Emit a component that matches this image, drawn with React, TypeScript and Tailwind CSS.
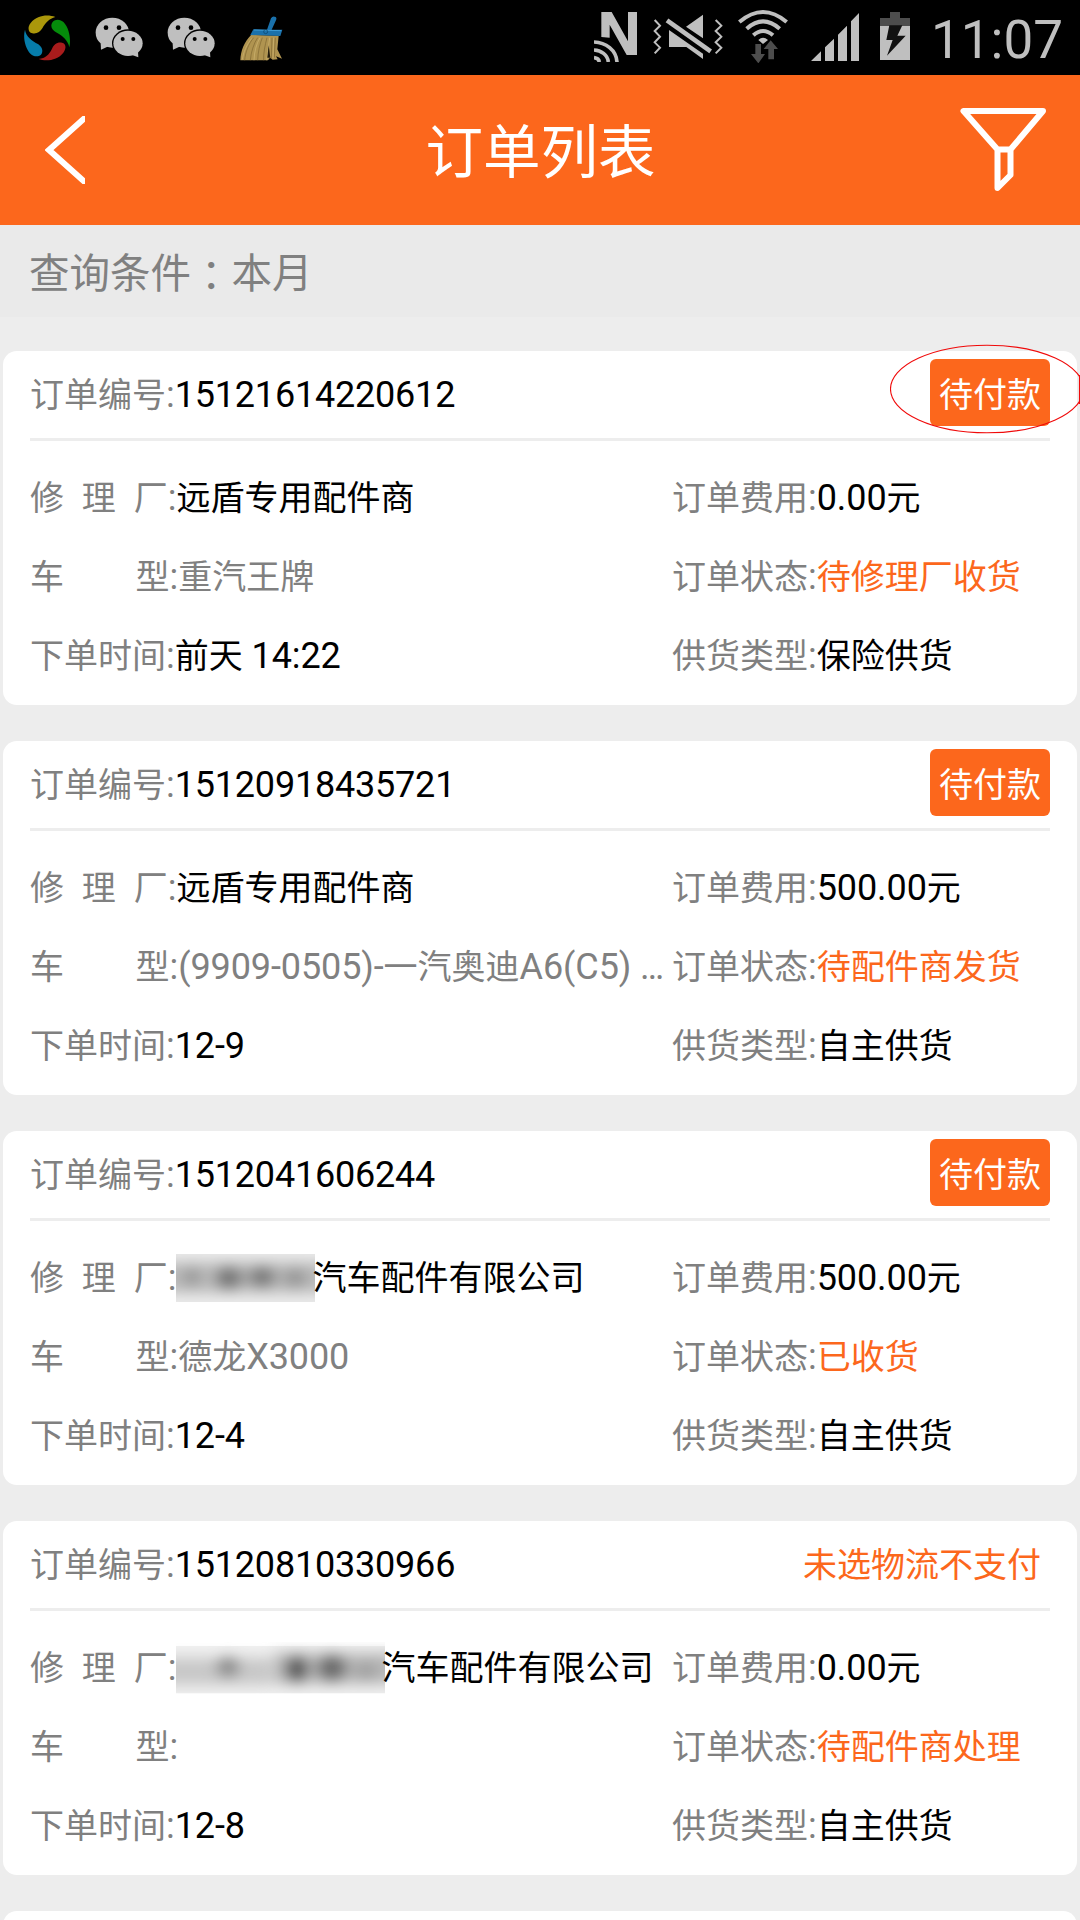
interface Order {
  id: string;
  shop: string;
  maskedShop?: 'short' | 'long';
  model: string;
  time: string;
  fee: string;
  status: string;
  supply: string;
  action: string;
  payable: boolean;
  highlighted?: boolean;
}

const orders: Order[] = [
  {
    id: '15121614220612',
    shop: '远盾专用配件商',
    model: '重汽王牌',
    time: '前天 14:22',
    fee: '0.00元',
    status: '待修理厂收货',
    supply: '保险供货',
    action: '待付款',
    payable: true,
    highlighted: true,
  },
  {
    id: '15120918435721',
    shop: '远盾专用配件商',
    model: '(9909-0505)-一汽奥迪A6(C5) …',
    time: '12-9',
    fee: '500.00元',
    status: '待配件商发货',
    supply: '自主供货',
    action: '待付款',
    payable: true,
  },
  {
    id: '1512041606244',
    shop: '汽车配件有限公司',
    maskedShop: 'short',
    model: '德龙X3000',
    time: '12-4',
    fee: '500.00元',
    status: '已收货',
    supply: '自主供货',
    action: '待付款',
    payable: true,
  },
  {
    id: '15120810330966',
    shop: '汽车配件有限公司',
    maskedShop: 'long',
    model: '',
    time: '12-8',
    fee: '0.00元',
    status: '待配件商处理',
    supply: '自主供货',
    action: '未选物流不支付',
    payable: false,
  },
];

// Chinese runs are set a little smaller than the digits around them
function Mixed({ text }: { text: string }) {
  const parts = text.split(/([\u4e00-\u9fff]+)/);
  return (
    <>
      {parts.map((part, i) => (
        <span key={i} className={i % 2 === 1 ? 'text-[34px]' : /\d/.test(part) ? 'tracking-[-0.1px]' : undefined}>
          {part}
        </span>
      ))}
    </>
  );
}

function WechatIcon() {
  return (
    <svg className="h-[41px] w-[49px]" viewBox="286 51 147 123" fill="#bfbfbf">
      <path d="M303 130l1 19 24-11z" />
      <ellipse cx="338" cy="98" rx="50" ry="45" />
      <ellipse cx="385" cy="130" rx="48" ry="42" fill="#000" />
      <path d="M395 164l21 8-1-17z" />
      <ellipse cx="385" cy="130" rx="44" ry="38" />
      <g fill="#000">
        <circle cx="319" cy="83" r="7" />
        <circle cx="358" cy="83" r="7" />
        <circle cx="369" cy="117" r="6" />
        <circle cx="401" cy="117" r="6" />
      </g>
    </svg>
  );
}

function SwirlIcon() {
  return (
    <svg className="h-[46px] w-[46px]" viewBox="72 44 138 138">
      <path d="M166 50C145 42 112 43 92 68C82 80 84 96 97 99C110 102 121 94 127 84C136 67 148 55 166 50Z" fill="#ab970b" />
      <path d="M208 141C213 120 209 85 191 66C180 55 163 56 156 68C150 80 158 90 168 96C190 108 204 121 208 141Z" fill="#058c0b" />
      <path d="M116 176C138 184 173 180 190 157C200 144 198 129 186 127C172 124 161 133 156 145C147 163 137 173 116 176Z" fill="#a81c1c" />
      <path d="M75 88C69 107 73 141 92 161C102 171 119 170 125 160C130 149 125 139 115 132C95 121 78 109 75 88Z" fill="#067caa" />
    </svg>
  );
}

function BroomIcon() {
  return (
    <svg className="h-[45px] w-[43px]" viewBox="722 47 129 135">
      <path d="M755 104C735 125 724 150 723 180H806L812 172L820 178L835 177L830 168L848 175L834 147L838 106Z" fill="#b09450" />
      <g fill="none" stroke="#7d6530" strokeWidth="2">
        <path d="M763 112C748 130 738 155 736 180M775 112C763 130 755 155 753 180M789 112C781 132 776 155 775 180M803 112C797 135 792 158 793 180M818 112L816 176M828 112L825 172" />
      </g>
      <g fill="none" stroke="#d0b774" strokeWidth="2">
        <path d="M757 114C742 134 732 155 729 178M782 112C771 130 765 155 764 180M811 112L802 180M823 112L821 174" />
      </g>
      <path d="M804 172L808 135L813 172Z" fill="#241c0c" />
      <path d="M762 87L803 88L815 54Q820 45 829 50Q833 53 830 60L817 88L849 88L843 107L753 104Z" fill="#1a71ab" />
      <path d="M764 89L846 91" stroke="#3c9bd4" strokeWidth="3" />
      <circle cx="799" cy="94" r="6" fill="none" stroke="#0b4268" strokeWidth="2" />
    </svg>
  );
}

function StatusBar() {
  return (
    <div className="flex h-[75px] items-start bg-black text-[#bfbfbf]">
      <div className="flex pl-6">
        <div className="pt-[15px]">
          <SwirlIcon />
        </div>
        <div className="ml-[25px] pt-[17px]">
          <WechatIcon />
        </div>
        <div className="ml-[23px] pt-[17px]">
          <WechatIcon />
        </div>
        <div className="ml-6 pt-4">
          <BroomIcon />
        </div>
      </div>

      <div className="ml-auto flex pr-[17px]">
        {/* NFC */}
        <svg className="mt-3 h-[50px] w-[43px]" viewBox="45 36 129 150">
          <path d="M67 36H98L147 124V36H174V165H143L92 74V113L67 111Z" fill="#bfbfbf" />
          <g fill="none" stroke="#bfbfbf" strokeWidth="11">
            <path d="M45 126C80 127 112 150 114 186" />
            <path d="M45 150C66 151 86 164 88 186" />
            <path d="M45 173C53 174 60 179 61 186" />
          </g>
        </svg>

        {/* muted, vibrating */}
        <svg className="ml-4 mt-[14px] h-[45px] w-[70px]" viewBox="222 42 210 135">
          <path d="M372 44V115L321 80ZM270 90L372 161V177L322 141H270Z" fill="#bfbfbf" />
          <path d="M264 61L395 154" stroke="#bfbfbf" strokeWidth="14" />
          <g fill="none" stroke="#bfbfbf" strokeWidth="6">
            <path d="M227 60L243 77L227 93L243 110L227 127L243 143L227 160" />
            <path d="M410 60L427 77L410 93L427 110L410 127L427 143L410 160" />
          </g>
        </svg>

        {/* wifi */}
        <svg className="ml-[15px] mt-[9px] h-[54px] w-[50px]" viewBox="477 27 150 162">
          <g fill="none" stroke="#bfbfbf" strokeWidth="12">
            <path d="M481 66Q552 6 623 66" />
            <path d="M503 86Q552 42 602 86" />
            <path d="M523 106Q552 80 582 106" />
          </g>
          <path d="M538 120Q552 106 567 120L552 132Z" fill="#bfbfbf" />
          <path d="M529 132H546V162H558L538 190L516 162H529ZM568 178H585V147H597L575 121L554 147H568Z" fill="#4d4d4d" />
        </svg>

        {/* signal */}
        <svg className="ml-[23px] mt-[13px] h-12 w-12" viewBox="696 39 144 144" fill="#bfbfbf">
          <path d="M696 183L726 154V183ZM738 183V142L765 116V183ZM777 183V104L804 77V183ZM816 183V64L840 39V183Z" />
        </svg>

        {/* battery */}
        <svg className="ml-[21px] mt-3 h-12 w-[30px]" viewBox="903 36 90 144">
          <path d="M933 36H963V54H993V78H903V54H933Z" fill="#4d4d4d" />
          <path d="M903 78H993V180H903Z" fill="#bfbfbf" />
          <path d="M931 76H970L955 107H980L924 167L941 120H922Z" fill="#111" />
        </svg>

        <span className="ml-[21px] mt-[9px] font-[Roboto] text-[53px] leading-[63px]">11:07</span>
      </div>
    </div>
  );
}

function Header() {
  return (
    <header className="flex h-[150px] items-center justify-between bg-[#fc671c] pr-[33px] pl-[45px] text-white">
      <svg className="h-[68px] w-10" viewBox="0 0 40 68" fill="none" stroke="currentColor" strokeWidth="6">
        <path d="M42 0L4 34L42 68" />
      </svg>
      <h1 className="pt-[7px] pr-[13px] pl-[49px] text-[57.5px] leading-[84px]">订单列表</h1>
      <svg
        className="h-[84px] w-[87px]"
        viewBox="0 0 87 84"
        fill="none"
        stroke="currentColor"
        strokeWidth="6"
        strokeLinejoin="round"
      >
        <path d="M3.5 3H83L50.5 41.5H37.5ZM37.5 41.5V80L50.5 67V41.5" />
      </svg>
    </header>
  );
}

function ShopMask({ size }: { size: 'short' | 'long' }) {
  if (size === 'short') {
    return (
      <svg className="-mr-[3px] h-12 w-[139px] shrink-0" viewBox="0 0 139 48">
        <defs>
          <filter id="mask-short" x="-30%" y="-50%" width="160%" height="200%">
            <feGaussianBlur stdDeviation="7" />
          </filter>
        </defs>
        <rect width="139" height="48" fill="#ececec" />
        <g filter="url(#mask-short)">
          <rect x="-14" y="8" width="168" height="31" fill="#bababa" />
          <ellipse cx="16" cy="23" rx="10" ry="9" fill="#999" />
          <ellipse cx="53" cy="24" rx="14" ry="11" fill="#747474" />
          <ellipse cx="86" cy="23" rx="14" ry="10" fill="#777" />
          <ellipse cx="119" cy="24" rx="12" ry="9" fill="#949494" />
        </g>
      </svg>
    );
  }
  return (
    <svg className="-mr-1 h-[52px] w-[209px] shrink-0" viewBox="0 0 209 52">
      <defs>
        <filter id="mask-long" x="-30%" y="-50%" width="160%" height="200%">
          <feGaussianBlur stdDeviation="7" />
        </filter>
      </defs>
      <rect y="4" width="209" height="47" fill="#f0f0f0" />
      <g filter="url(#mask-long)">
        <rect x="-14" y="16" width="110" height="27" fill="#c8c8c8" />
        <rect x="98" y="11" width="126" height="31" fill="#b8b8b8" />
        <ellipse cx="52" cy="25" rx="12" ry="10" fill="#888" />
        <ellipse cx="121" cy="27" rx="12" ry="13" fill="#5a5a5a" />
        <ellipse cx="156" cy="26" rx="15" ry="13" fill="#6a6a6a" />
        <ellipse cx="190" cy="29" rx="12" ry="9" fill="#a0a0a0" />
      </g>
    </svg>
  );
}

interface FieldProps {
  label: string;
  value: string;
  tone?: string;
  mask?: 'short' | 'long';
}

function Field({ label, value, tone = 'text-black', mask }: FieldProps) {
  return (
    <div className="flex h-[79px] items-center whitespace-pre">
      <span className="text-[#808080]">
        <Mixed text={label} />
      </span>
      {mask && <ShopMask size={mask} />}
      <span className={tone}>
        <Mixed text={value} />
      </span>
    </div>
  );
}

function OrderCard({ order }: { order: Order }) {
  return (
    <section className="h-[354px] rounded-[14px] bg-white px-[27px]">
      <div className="flex h-[90px] items-start justify-between border-b-[3px] border-[#ededed]">
        <div className="flex h-[87px] items-center">
          <span className="text-[#808080]">
            <Mixed text="订单编号:" />
          </span>
          <span className="tracking-[-0.2px]">{order.id}</span>
        </div>
        <div className="relative mt-2">
          {order.payable ? (
            <button className="block h-[67px] w-[120px] rounded-md bg-[#fc671c] text-[34px] leading-[72px] text-white">
              {order.action}
            </button>
          ) : (
            <span className="block px-[9px] text-[34px] leading-[72px] text-[#fc671c]">{order.action}</span>
          )}
          {order.highlighted && (
            <svg
              className="absolute -top-[15px] -left-10 h-[90px] w-[190px]"
              viewBox="0 0 190 90"
              fill="none"
              stroke="#f00a0a"
              strokeWidth="1.1"
            >
              <ellipse cx="97" cy="45" rx="96.5" ry="43.8" />
              <path d="M189.5 31V60" />
            </svg>
          )}
        </div>
      </div>

      <div className="grid grid-cols-[642px_1fr] pt-[17px]">
        <Field label="修  理  厂:" value={order.shop} mask={order.maskedShop} />
        <Field label="订单费用:" value={order.fee} />
        <Field label="车        型:" value={order.model} tone="text-[#808080]" />
        <Field label="订单状态:" value={order.status} tone="text-[#fc671c]" />
        <Field label="下单时间:" value={order.time} />
        <Field label="供货类型:" value={order.supply} />
      </div>
    </section>
  );
}

export default function App() {
  return (
    <div className="h-[1920px] w-[1080px] overflow-hidden bg-[#ededed] font-[Roboto,'Noto_Sans_CJK_SC',sans-serif] text-[36px] leading-[48px] text-black">
      <StatusBar />
      <Header />
      <div className="h-[92px] bg-[#eaeaea] pt-4 pl-[29px] text-[40.5px] leading-[60px] text-[#808080]">
        查询条件
        <span className="relative top-[3px] font-['Noto_Sans_CJK_TC',sans-serif]" lang="zh-TW">
          {'\uff1a'}
        </span>
        本月
      </div>
      <main className="flex flex-col gap-9 px-[3px] pt-[34px]">
        {orders.map((order) => (
          <OrderCard key={order.id} order={order} />
        ))}
        {/* next card, only its top edge is in view */}
        <section className="h-[354px] rounded-[14px] bg-white" />
      </main>
    </div>
  );
}
